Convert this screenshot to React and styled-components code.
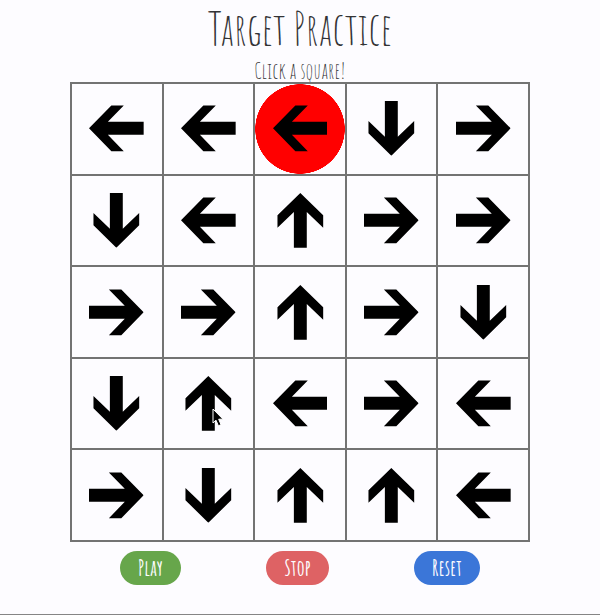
import React from "react";
import styled, { createGlobalStyle, css } from "styled-components";

const GlobalStyle = createGlobalStyle`
  *, *::before, *::after { box-sizing: border-box; }
  body {
    margin: 0;
    background: #fdfcff;
    color: #333335;
    font-family: "Amatic SC", "Liberation Sans Narrow", "DejaVu Sans Condensed", sans-serif;
  }
`;

const Page = styled.main`
  min-height: 100vh;
  display: flex;
  flex-direction: column;
  align-items: center;
  padding: 0 20px;
  border-bottom: 1px solid #858585;
`;

const Title = styled.h1`
  margin: 0 0 4px;
  font-size: 44px;
  line-height: 56px;
  font-weight: 400;
  white-space: nowrap;
`;

const Hint = styled.p`
  margin: 0;
  font-size: 22px;
  line-height: 22px;
  white-space: nowrap;
`;

const Board = styled.div`
  width: 100%;
  max-width: 460px;
  display: grid;
  grid-template-columns: repeat(5, 1fr);
  gap: 2px;
  padding: 2px;
  background: #737373;
`;

const Square = styled.button`
  position: relative;
  aspect-ratio: 1;
  display: grid;
  place-items: center;
  padding: 0;
  border: 0;
  background: ${(p) =>
    p.$active
      ? "radial-gradient(circle closest-side, #ff0000 99%, #fdfcff 100%)"
      : "#fdfcff"};
  cursor: pointer;
`;

const turns = { left: 0, up: 90, right: 180, down: 270 };

const ArrowSvg = styled.svg`
  width: 61%;
  display: block;
  ${(p) => css`transform: rotate(${turns[p.$direction]}deg);`}
`;

const Pointer = styled.svg`
  position: absolute;
  left: 54%;
  top: 55%;
  width: 12px;
  height: 19px;
`;

const Controls = styled.div`
  width: 100%;
  max-width: 460px;
  display: flex;
  justify-content: space-between;
  padding: 9px 50px 0;
`;

const tones = { play: "#67a64b", stop: "#de6264", reset: "#3b76d8" };

const PillButton = styled.button`
  height: 34px;
  padding: 0 18px;
  border: 0;
  border-radius: 17px;
  background: ${(p) => tones[p.$tone]};
  color: #fdfcff;
  font: inherit;
  font-size: 22px;
  font-weight: 700;
  line-height: 34px;
  cursor: pointer;
`;

const rows = [
  ["left", "left", "left", "down", "right"],
  ["down", "left", "up", "right", "right"],
  ["right", "right", "up", "right", "down"],
  ["down", "up", "left", "right", "left"],
  ["right", "down", "up", "up", "left"],
];

function Arrow({ direction }) {
  return (
    <ArrowSvg viewBox="0 0 55 55" $direction={direction} aria-hidden="true">
      <path d="M0 27.5 22.5 4.5H35L19 21H55V34H19L35 50.5H22.5Z" />
    </ArrowSvg>
  );
}

export default function App() {
  return (
    <>
      <GlobalStyle />
      <Page>
        <Title>Target Practice</Title>
        <Hint>Click a square!</Hint>
        <Board>
          {rows.map((row, y) =>
            row.map((direction, x) => (
              <Square
                key={`${y}-${x}`}
                type="button"
                $active={y === 0 && x === 2}
                aria-label={`Row ${y + 1}, column ${x + 1}: ${direction}`}
              >
                <Arrow direction={direction} />
                {y === 3 && x === 1 && (
                  <Pointer viewBox="0 0 12 19" aria-hidden="true">
                    <path
                      d="M1 1V15L4 12.2 6.4 17.8 9 16.7 6.7 11.2H11Z"
                      fill="#000"
                      stroke="#fff"
                      strokeWidth="1"
                    />
                  </Pointer>
                )}
              </Square>
            ))
          )}
        </Board>
        <Controls>
          <PillButton type="button" $tone="play">Play</PillButton>
          <PillButton type="button" $tone="stop">Stop</PillButton>
          <PillButton type="button" $tone="reset">Reset</PillButton>
        </Controls>
      </Page>
    </>
  );
}
